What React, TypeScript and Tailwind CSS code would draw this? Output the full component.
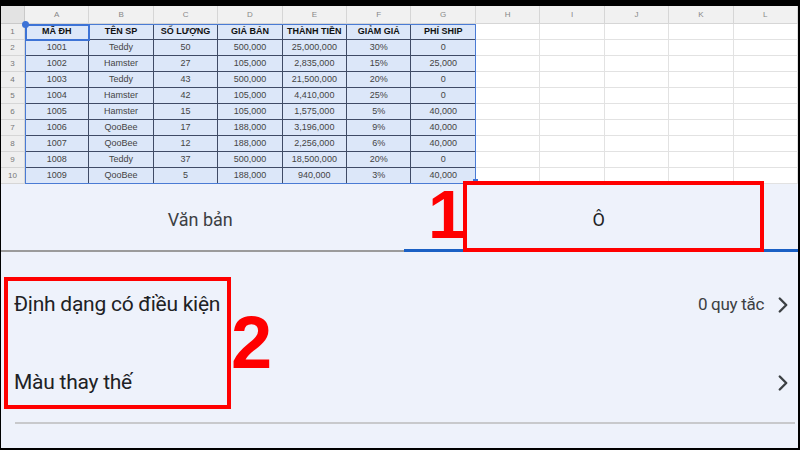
import { ChevronRight } from "lucide-react";

const cols = ["A", "B", "C", "D", "E", "F", "G", "H", "I", "J", "K", "L"];

const head = ["MÃ ĐH", "TÊN SP", "SỐ LƯỢNG", "GIÁ BÁN", "THÀNH TIỀN", "GIẢM GIÁ", "PHÍ SHIP"];

const rows = [
  ["1001", "Teddy", "50", "500,000", "25,000,000", "30%", "0"],
  ["1002", "Hamster", "27", "105,000", "2,835,000", "15%", "25,000"],
  ["1003", "Teddy", "43", "500,000", "21,500,000", "20%", "0"],
  ["1004", "Hamster", "42", "105,000", "4,410,000", "25%", "0"],
  ["1005", "Hamster", "15", "105,000", "1,575,000", "5%", "40,000"],
  ["1006", "QooBee", "17", "188,000", "3,196,000", "9%", "40,000"],
  ["1007", "QooBee", "12", "188,000", "2,256,000", "6%", "40,000"],
  ["1008", "Teddy", "37", "500,000", "18,500,000", "20%", "0"],
  ["1009", "QooBee", "5", "188,000", "940,000", "3%", "40,000"],
];

function Sheet() {
  const all = [head, ...rows];
  return (
    <div className="relative h-[178px] shrink-0 overflow-hidden bg-white font-['Liberation_Sans',Arial,sans-serif]">
      {/* column letters */}
      <div className="grid h-[18px] grid-cols-[24px_repeat(12,minmax(0,1fr))] bg-[#f1f1f1]">
        <div className="border-r border-b border-[#c9c9c9] bg-[#e3e3e3]" />
        {cols.map((c) => (
          <div
            key={c}
            className="flex items-center justify-center border-r border-b border-[#d6d6d6] text-[8px] text-[#888]"
          >
            {c}
          </div>
        ))}
      </div>
      {all.map((r, i) => (
        <div key={i} className="grid h-[16px] grid-cols-[24px_repeat(12,minmax(0,1fr))]">
          <div className="flex items-center justify-center border-r border-b border-[#d6d6d6] bg-[#efefef] text-[8px] text-[#777]">
            {i + 1}
          </div>
          {cols.map((c, j) => {
            const v = r[j];
            if (j < 7)
              return (
                <div
                  key={c}
                  className={`flex items-center justify-center border-r border-b border-[#3f4b66] bg-[#dce7f9] text-[9px] leading-none ${
                    i === 0 ? "font-bold text-[#111]" : "text-[#444]"
                  }`}
                >
                  {v}
                </div>
              );
            return <div key={c} className="border-r border-b border-[#e2e2e2]" />;
          })}
        </div>
      ))}
      {/* 10th row, partly hidden under the panel */}
      <div className="grid h-[14px] grid-cols-[24px_repeat(12,minmax(0,1fr))] overflow-hidden">
        <div className="flex items-start justify-center border-r border-[#d6d6d6] bg-[#efefef] pt-[2px] text-[8px] leading-none text-[#777]">
          10
        </div>
        {["1009", "QooBee", "5", "188,000", "940,000", "3%", "40,000"].map((v, j) => (
          <div
            key={j}
            className="flex items-start justify-center border-r border-[#3f4b66] bg-[#dce7f9] pt-[3px] text-[9px] leading-none text-[#444]"
          >
            {v}
          </div>
        ))}
        {[0, 1, 2, 3, 4].map((k) => (
          <div key={k} className="border-r border-[#e2e2e2]" />
        ))}
      </div>
      {/* selection */}
      <div className="pointer-events-none absolute left-[24px] top-[18px] h-[160px] w-[calc((100%-24px)*7/12)] border border-[#4a7bd4]" />
      <div className="pointer-events-none absolute left-[24px] top-[18px] h-[17px] w-[calc((100%-24px)/12+1px)] border-2 border-[#3d73d6]" />
      <div className="absolute left-[21px] top-[15px] h-[7px] w-[7px] rounded-full bg-[#3d73d6]" />
      <div className="absolute bottom-0 left-[calc(24px+(100%-24px)*7/12-3px)] h-[5px] w-[5px] bg-[#3d73d6]" />
    </div>
  );
}

export default function App() {
  return (
    <div className="box-border flex h-[450px] w-[800px] flex-col overflow-hidden border-t-[6px] border-r-2 border-b-2 border-l border-black bg-[#eef2fb]">
      <Sheet />
      <div className="relative flex-1 font-['Roboto','Noto_Sans',sans-serif]">
        {/* tabs */}
        <div className="flex h-[68px] border-b-2 border-[#9b9b9b]">
          <div className="flex flex-1 items-center justify-center pt-[4px] text-[18px] text-[#3c4043]">
            Văn bản
          </div>
          <div className="relative flex flex-1 items-center justify-center pt-[4px] text-[18px] text-[#202124]">
            Ô
            <div className="absolute right-0 bottom-[-2px] left-[4px] h-[3px] bg-[#1a60c4]" />
          </div>
        </div>

        {/* rows */}
        <div className="pt-[14px] pl-[13px] pr-[2px]">
          <div className="flex h-[78px] items-center justify-between">
            <span className="text-[21px] tracking-[-0.25px] text-[#202124]">Định dạng có điều kiện</span>
            <span className="flex items-center gap-[6px] text-[17px] tracking-[-0.3px] text-[#3c4043]">
              0 quy tắc
              <ChevronRight size={26} strokeWidth={2.2} className="text-[#3c4043]" />
            </span>
          </div>
          <div className="flex h-[78px] items-center justify-between">
            <span className="text-[21px] tracking-[-0.25px] text-[#202124]">Màu thay thế</span>
            <ChevronRight size={26} strokeWidth={2.2} className="text-[#3c4043]" />
          </div>
          <div className="ml-px mr-px h-[2px] bg-[#c8c9cc]" />
        </div>

        {/* annotations */}
        <div className="absolute top-[-3px] left-[462px] h-[71px] w-[301px] border-4 border-[#ff0000]" />
        <div className="absolute top-[-4px] left-[427px] text-[68px] leading-none font-black text-[#ff0000] font-['Liberation_Sans',Arial,sans-serif]">
          1
        </div>
        <div className="absolute top-[93px] left-[3px] h-[132px] w-[227px] border-4 border-[#ff0000]" />
        <div className="absolute top-[122px] left-[230px] text-[74px] leading-none font-black text-[#ff0000] font-['Liberation_Sans',Arial,sans-serif]">
          2
        </div>
      </div>
    </div>
  );
}
